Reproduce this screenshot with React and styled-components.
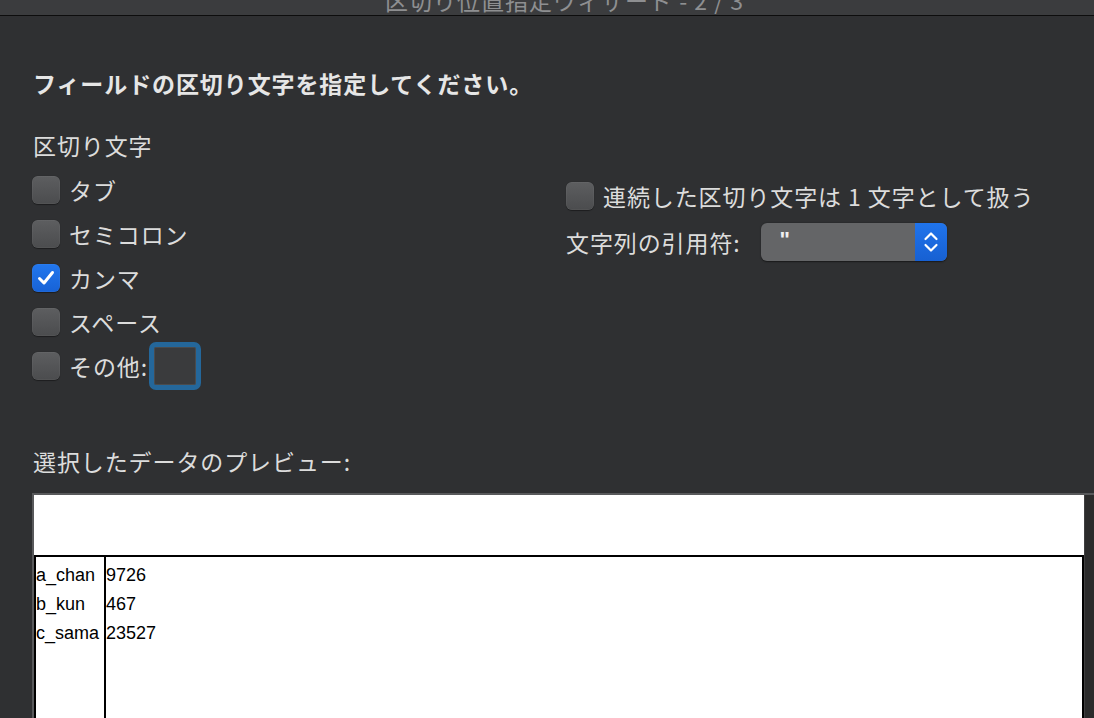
import React from 'react';
import styled, { createGlobalStyle } from 'styled-components';

const GlobalStyle = createGlobalStyle`
	html, body {
		margin: 0;
		padding: 0;
		background: #2f3032;
		overflow: hidden;
	}
	body {
		font-family: "Noto Sans CJK JP", "Noto Sans", sans-serif;
	}
`;

const delimiters = [
	{ label: 'タブ', checked: false },
	{ label: 'セミコロン', checked: false },
	{ label: 'カンマ', checked: true },
	{ label: 'スペース', checked: false },
];

const rows = [
	['a_chan', '9726'],
	['b_kun', '467'],
	['c_sama', '23527'],
];

const CheckBox = ({ checked }) => (
	<Box $checked={checked}>
		{checked && (
			<svg width="28" height="28" viewBox="0 0 28 28">
				<polyline points="7.5,14.5 12,19 20.5,8.5" fill="none" stroke="#fff" strokeWidth="3" strokeLinecap="round" strokeLinejoin="round" />
			</svg>
		)}
	</Box>
);

const App = () => {
	return (
		<>
			<GlobalStyle />
			<Window>
				<TitleBar>
					<Title>区切り位置指定ウィザード - 2 / 3</Title>
				</TitleBar>
				<Content>
					<Heading>フィールドの区切り文字を指定してください。</Heading>
					<Options>
						<Column>
							<SectionLabel>区切り文字</SectionLabel>
							{delimiters.map((d) => (
								<CheckRow key={d.label}>
									<CheckBox checked={d.checked} />
									<span>{d.label}</span>
								</CheckRow>
							))}
							<CheckRow>
								<CheckBox />
								<span>その他:</span>
								<OtherField />
							</CheckRow>
						</Column>
						<Column $offset={44} $gap={2}>
							<CheckRow>
								<CheckBox />
								<span>連続した区切り文字は 1 文字として扱う</span>
							</CheckRow>
							<SelectRow>
								<SelectLabel>文字列の引用符:</SelectLabel>
								<Select>
									<SelectValue>"</SelectValue>
									<SelectArrows>
										<svg width="16" height="24" viewBox="0 0 16 24">
											<path d="M2.5 9 L8 3.5 L13.5 9" fill="none" stroke="#fff" strokeWidth="2.2" strokeLinecap="round" strokeLinejoin="round" />
											<path d="M2.5 15 L8 20.5 L13.5 15" fill="none" stroke="#fff" strokeWidth="2.2" strokeLinecap="round" strokeLinejoin="round" />
										</svg>
									</SelectArrows>
								</Select>
							</SelectRow>
						</Column>
					</Options>
					<PreviewLabel>選択したデータのプレビュー:</PreviewLabel>
					<PreviewBox>
						<PreviewArea>
							<PreviewBlank />
							<DataTable>
								<DataColumn $first>
									{rows.map((r) => (
										<Cell key={r[0]}>{r[0]}</Cell>
									))}
								</DataColumn>
								<DataColumn>
									{rows.map((r) => (
										<Cell key={r[0]}>{r[1]}</Cell>
									))}
								</DataColumn>
							</DataTable>
						</PreviewArea>
						<ScrollTrack />
					</PreviewBox>
				</Content>
			</Window>
		</>
	);
};

export default App;

const Window = styled.div`
	background: #2f3032;
	color: #dcdcdc;
	display: flex;
	flex-direction: column;
	height: 718px;
	overflow: hidden;
	width: 1094px;
`;

const TitleBar = styled.div`
	background: #3b3c3e;
	border-bottom: 1px solid #0d0d0d;
	flex: none;
	height: 15px;
	overflow: hidden;
	padding-left: 385px;
`;

const Title = styled.div`
	color: #8e8f91;
	font-size: 23px;
	letter-spacing: 1px;
	line-height: 23px;
	margin-top: -11px;
	white-space: nowrap;
`;

const Content = styled.div`
	display: flex;
	flex: 1;
	flex-direction: column;
	padding: 52px 0 0 32px;
`;

const Heading = styled.h1`
	color: #e6e6e6;
	font-size: 23px;
	font-weight: 700;
	letter-spacing: 0.9px;
	line-height: 30px;
	margin: 0;
	padding-left: 1px;
`;

const Options = styled.div`
	display: grid;
	grid-template-columns: 534px 1fr;
	margin-top: 32px;
`;

const Column = styled.div`
	display: flex;
	flex-direction: column;
	gap: ${(p) => p.$gap || 0}px;
	padding-top: ${(p) => p.$offset || 0}px;
`;

const SectionLabel = styled.div`
	font-size: 23px;
	letter-spacing: 0.9px;
	line-height: 30px;
	margin-bottom: 8px;
	padding-left: 1px;
`;

const CheckRow = styled.label`
	align-items: center;
	display: flex;
	font-size: 23px;
	gap: 9px;
	height: 44px;
	letter-spacing: 0.9px;
	white-space: nowrap;
`;

const Box = styled.span`
	background: ${(p) =>
		p.$checked ? 'linear-gradient(#2277ee, #1762d6)' : 'linear-gradient(#5d5e60, #4b4c4e)'};
	border-radius: 6px;
	box-shadow: inset 0 0 0 0.5px rgba(255, 255, 255, 0.08), 0 0.5px 1px rgba(0, 0, 0, 0.4);
	display: block;
	flex: none;
	height: 28px;
	width: 28px;

	svg {
		display: block;
	}
`;

const OtherField = styled.span`
	background: #3a3b3d;
	border: 5px solid #24679b;
	border-radius: 7px;
	box-shadow: inset 0 0 0 1px #4a4b4d;
	box-sizing: border-box;
	display: block;
	height: 48px;
	margin-left: -8px;
	width: 52px;
`;

const SelectRow = styled.div`
	align-items: center;
	display: flex;
	font-size: 23px;
	height: 44px;
	letter-spacing: 0.9px;
`;

const SelectLabel = styled.span`
	margin-right: 20px;
	white-space: nowrap;
`;

const Select = styled.div`
	background: #646567;
	border-radius: 6px;
	box-shadow: 0 0.5px 1.5px rgba(0, 0, 0, 0.5);
	display: flex;
	height: 38px;
	overflow: hidden;
	width: 186px;
`;

const SelectValue = styled.span`
	color: #f0f0f0;
	flex: 1;
	font-family: "Liberation Sans", sans-serif;
	font-size: 22px;
	font-weight: 700;
	letter-spacing: 0;
	line-height: 34px;
	padding-left: 19px;
`;

const SelectArrows = styled.span`
	align-items: center;
	background: linear-gradient(#2074ec, #1760d2);
	display: flex;
	justify-content: center;
	width: 32px;

	svg {
		display: block;
	}
`;

const PreviewLabel = styled.div`
	font-size: 23px;
	letter-spacing: 0.9px;
	line-height: 30px;
	margin-top: 58px;
	padding-left: 1px;
`;

const PreviewBox = styled.div`
	align-self: flex-start;
	border-left: 2px solid #58595b;
	border-top: 2px solid #58595b;
	box-sizing: border-box;
	display: flex;
	flex: 1;
	flex-shrink: 0;
	margin-top: 17px;
	width: 1068px;
`;

const PreviewArea = styled.div`
	background: #fff;
	display: flex;
	flex: 1;
	flex-direction: column;
`;

const PreviewBlank = styled.div`
	height: 60px;
`;

const DataTable = styled.div`
	border: 2px solid #000;
	border-bottom: none;
	display: flex;
	flex: 1;
`;

const DataColumn = styled.div`
	border-right: ${(p) => (p.$first ? '2px solid #000' : 'none')};
	flex: ${(p) => (p.$first ? '0 0 68px' : '1')};
	padding-top: 4px;
`;

const Cell = styled.div`
	color: #000;
	font-family: "Liberation Sans", sans-serif;
	font-size: 18px;
	line-height: 29px;
	white-space: nowrap;
`;

const ScrollTrack = styled.div`
	background: #2b2b2b;
	border-left: 1px solid #3f3f40;
	flex: none;
	width: 15px;
`;
